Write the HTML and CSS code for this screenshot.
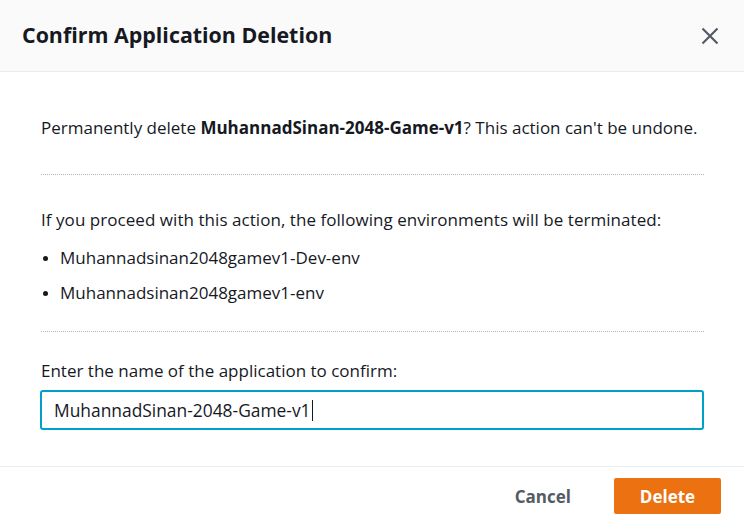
FILE: index.html
```html
<!DOCTYPE html>
<html lang="en">
<head>
<meta charset="utf-8">
<link rel="stylesheet" href="styles.css">
</head>
<body>
<div class="modal">
  <header class="modal-header">
    <h1 class="modal-title">Confirm Application Deletion</h1>
    <button class="close-btn" aria-label="Close">
      <svg width="18" height="18" viewBox="0 0 18 18"><path d="M1.5 1.5 L16.5 16.5 M16.5 1.5 L1.5 16.5" stroke="#545b64" stroke-width="2.2" fill="none"/></svg>
    </button>
  </header>
  <main class="modal-body">
    <p class="intro">Permanently delete <strong>MuhannadSinan-2048-Game-v1</strong>? This action can't be undone.</p>
    <hr class="divider divider-1">
    <p class="envs-label">If you proceed with this action, the following environments will be terminated:</p>
    <ul class="env-list">
      <li>Muhannadsinan2048gamev1-Dev-env</li>
      <li>Muhannadsinan2048gamev1-env</li>
    </ul>
    <hr class="divider divider-2">
    <label class="confirm-label">Enter the name of the application to confirm:</label>
    <div class="input-box"><span class="input-text">MuhannadSinan-2048-Game-v1</span><span class="caret"></span></div>
  </main>
  <footer class="modal-footer">
    <button class="btn-cancel">Cancel</button>
    <button class="btn-delete">Delete</button>
  </footer>
</div>
</body>
</html>
```
FILE: styles.css
```css
* { box-sizing: border-box; }
html, body { margin: 0; padding: 0; background: #fff; }
body { font-family: "Open Sans", "Noto Sans", sans-serif; color: #16191f; width: 744px; height: 525px; overflow: hidden; }
.modal { display: flex; flex-direction: column; height: 525px; }
.modal-header {
  flex: 0 0 72px; height: 72px; background: #fafafa; border-bottom: 1px solid #eaeded;
  display: flex; align-items: center; justify-content: space-between;
  padding: 0 25px 0 22px;
}
.modal-title { margin: 0 0 2px; font-size: 21.4px; font-weight: 700; color: #16191f; letter-spacing: 0; }
.close-btn { background: none; border: 0; padding: 0; width: 18px; height: 18px; display: flex; }
.modal-body { padding: 0 40px 0 41px; flex: 1 1 auto; }
.modal-body p { margin: 0; font-size: 17px; line-height: 22px; }
.intro { padding-top: 45px; }
.intro strong { font-weight: 700; }
.divider { border: 0; border-top: 1px dotted #aab7b8; }
.divider-1 { margin: 35px 0 34px; }
.divider-2 { margin: 27px 0 28px; }
.envs-label { letter-spacing: 0.05px; }
.env-list { margin: 0; padding: 16px 0 0 19px; font-size: 17px; line-height: 22px; }
.env-list li { margin-bottom: 13px; }
.env-list li:last-child { margin-bottom: 0; }
.env-list li::marker { font-size: 14px; }
.confirm-label { display: block; font-size: 17px; line-height: 22px; margin-bottom: 8px; }
.input-box {
  height: 40px; margin-left: -1px; border: 2px solid #00a1c9; border-radius: 3px;
  display: flex; align-items: center; padding: 0 12px; font-size: 17.4px;
}
.caret { width: 1px; height: 21px; background: #16191f; margin-left: 1px; }
.modal-footer {
  flex: 0 0 59px; border-top: 1px solid #eaeded; display: flex; align-items: center;
  justify-content: flex-end; padding: 0 23px 0 0; gap: 43px;
}
.btn-cancel { background: none; border: 0; font-family: inherit; font-size: 17px; font-weight: 700; color: #545b64; padding: 0; }
.btn-delete {
  background: #ec7211; border: 0; border-radius: 2px; color: #fff; font-family: inherit;
  font-size: 17px; font-weight: 700; width: 107px; height: 36px;
}
```
